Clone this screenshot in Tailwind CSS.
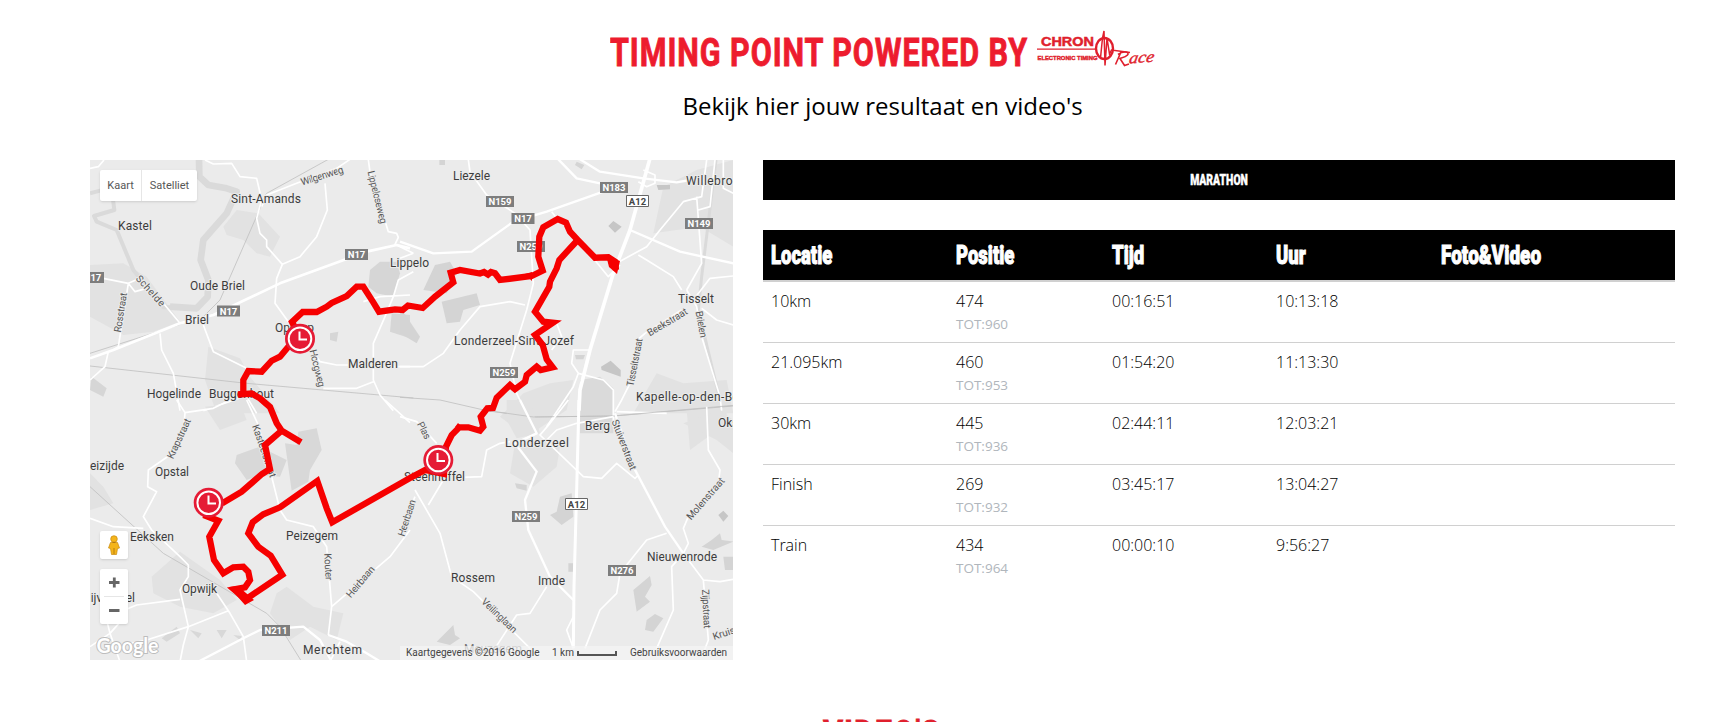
<!DOCTYPE html>
<html lang="nl">
<head>
    <meta charset="UTF-8">
    <meta name="viewport" content="width=device-width, initial-scale=1.0">
    <title>Timing Point</title>
    <script src="https://cdn.jsdelivr.net/npm/@tailwindcss/browser@4"></script>
</head>
<body class="bg-white font-['Open_Sans',sans-serif]">
<div class="h-[722px] overflow-hidden">
    <!-- Header -->
    <header class="flex flex-col items-center pl-[42px] pt-[26px]">
        <h1 class="flex h-12">
            <svg class="w-[546px] h-12" viewBox="610 26 546 48" fill="#ed1c2e">
                <text x="610" y="66" textLength="418" lengthAdjust="spacingAndGlyphs" font-family="Roboto" font-weight="700" font-size="39.500" letter-spacing="1.200" stroke="#ed1c2e" stroke-width=".9">TIMING POINT POWERED BY</text>
                <!-- Chronorace logo -->
                <g fill="#e01f2d">
                    <text x="1041" y="46" textLength="53" lengthAdjust="spacingAndGlyphs" font-family="Liberation Sans" font-weight="700" font-size="12.500" stroke="#e01f2d" stroke-width=".5">CHRON</text>
                    <path d="M1037 48.500h60v1.200h-60z"/>
                    <text x="1037.500" y="60" textLength="60" lengthAdjust="spacingAndGlyphs" font-family="Liberation Sans" font-weight="700" font-size="5.500" stroke="#e01f2d" stroke-width=".4">ELECTRONIC TIMING</text>
                    <ellipse cx="1104.500" cy="48.500" rx="8.500" ry="10.500" fill="none" stroke="#e01f2d" stroke-width="2.400"/>
                    <path d="M1100.500 58L1102.500 38L1104 31L1105 65.500L1107 38L1109.500 54L1111.500 50L1130 52.500" fill="none" stroke="#e01f2d" stroke-width="1.500"/>
                    <path d="M1121 52L1115.500 64.500M1118 54.500C1124 50 1130 52 1127.500 55C1125.500 57.500 1121 58 1120 58.500L1124.500 65.500L1129 64" fill="none" stroke="#e01f2d" stroke-width="1.600"/>
                    <text transform="translate(1128.500 63.500) rotate(-4) skewX(-14)" textLength="25" lengthAdjust="spacingAndGlyphs" font-family="Liberation Serif" font-style="italic" font-size="16" stroke="#e01f2d" stroke-width=".4">ace</text>
                </g>
            </svg>
        </h1>
        <p class="mt-[14px] text-[24px] leading-9 font-normal text-black">Bekijk hier jouw resultaat en video's</p>
    </header>

    <main class="flex gap-[30px] pl-[90px] pt-9">
        <!-- Map -->
        <div class="relative w-[643px] h-[500px] overflow-hidden bg-[#ebebeb] font-['Roboto',sans-serif]">
            <svg class="block w-[643px] h-[500px]" viewBox="90 160 643 500">
                <!-- north west -->
                <g transform="translate(80 150) scale(.33333)" fill="none" stroke-linejoin="round">
                    <g fill="#e2e2e2">
                        <path d="M470 180L535 190L600 260L570 320L530 310L490 270L440 255L430 230Z"/>
                        <path d="M30 345L130 340L200 380L300 515L220 545L130 555L30 500Z"/>
                        <path d="M385 590L480 625L510 680L600 790H410L375 690Z"/>
                    </g>
                    <g fill="#d6d6d6">
                        <path d="M870 360L900 335L950 335L960 370L940 440L890 430L865 410Z"/>
                        <path d="M935 490L990 495V565L930 545Z"/>
                        <path d="M750 550L775 545L770 575L750 570ZM35 680L80 715L70 740L30 720Z"/>
                    </g>
                    <path d="M357 25L358 80L385 105L440 115L470 125L440 190L370 270L362 330L385 390L383 440L350 475L270 470" stroke="#dadada" stroke-width="20"/>
                    <path d="M300 472H250L200 410L160 360L110 240L50 215L42 198L103 180L98 140L60 122L30 130" stroke="#dadada" stroke-width="12"/>
                    <path d="M30 648L500 700L1000 744M30 610L250 540L370 500L420 450L560 130L745 28" stroke="#c0c0c0" stroke-width="2.500"/>
                    <path d="M30 625L100 600L300 520L400 495L600 400L860 305L950 285L990 295" stroke="#fff" stroke-width="8"/>
                    <path d="M375 30L400 42L455 40L480 80L530 85L545 150L530 205L540 250L560 270V290L607 343L590 385L585 460L625 515M810 28L770 55L650 100L560 135L545 170M735 100L742 180L710 260L660 320L607 343M865 30L870 65L925 245L950 250L955 262L945 283L1000 310M1000 365L955 390L940 440L915 500L880 580L880 690L900 735L940 782M70 385L145 400L180 385M145 400L165 425L200 415L250 460L300 520M145 400L115 590L100 600M240 550L245 600L280 670L300 782M370 525L400 605L500 655M85 605L75 650L30 690M700 605L720 635L770 645L805 645M925 650H990M730 715L830 715L880 695M370 782L490 740M500 740L530 790M30 55L55 50L72 30M850 455L900 440L990 435" stroke="#fff" stroke-width="5"/>
                </g>
                <!-- north east -->
                <g transform="translate(400 150) scale(.33333)" fill="none" stroke-linejoin="round">
                    <g fill="#e2e2e2">
                        <path d="M790 110L890 60L1000 30V290L900 230L760 250Z"/>
                        <path d="M370 730L450 700L520 690L500 780L380 860L300 800ZM770 670L850 700L980 690L1000 790H700Z"/>
                        <path d="M860 780H980V820L870 900Z"/>
                        <path d="M540 690L600 680L640 715V850H540Z" fill="#dadada"/>
                    </g>
                    <g fill="#d4d4d4">
                        <path d="M105 345L150 335L170 370L140 430L70 420Z"/>
                        <path d="M125 455L230 430L240 465L190 480L180 515L140 520Z"/>
                        <path d="M0 475L20 500L60 560L50 580L0 550Z"/>
                        <path d="M118 30H135V45H118ZM530 35L553 45L545 58L525 45ZM525 615L555 615L550 628H528Z"/>
                    </g>
                    <g fill="#c6c6c6">
                        <path d="M603 650L632 632L662 660V680L605 660Z"/>
                        <path d="M625 228L640 213L665 230L645 248ZM770 105H810V118L775 120Z"/>
                    </g>
                    <path d="M948 30L905 380L895 480L960 750" stroke="#dadada" stroke-width="9"/>
                    <path d="M0 742L120 750L260 782L400 801L640 798L1000 768" stroke="#c0c0c0" stroke-width="2.500"/>
                    <path d="M750 25L690 240L640 370L570 600L540 720L537 782" stroke="#fff" stroke-width="11"/>
                    <path d="M475 28L530 85L600 100M540 28L600 65L730 85L830 97L870 90M610 125L440 185L340 215L215 305L100 310L0 275M690 240L840 305L1000 340" stroke="#fff" stroke-width="7"/>
                    <path d="M205 30L210 65L260 135L345 190L390 240L400 400L380 480L330 640L350 730L375 782M730 60L765 75L765 100L740 110L715 95M640 345L740 290L780 240L850 155L905 140L920 30M890 140L893 180L905 340L860 420M845 420L820 380L740 330L715 315M895 180L930 170L945 30M860 420L890 470L905 560L960 740L965 782M905 475L950 510L1000 525M880 450L930 385L1000 378M580 325L625 380L660 345M845 480L735 550L712 570M690 700L665 750L645 785M0 650L70 650L130 610L180 540L240 470L330 455L375 465M0 325L40 310M455 185L470 205M470 520L485 560L455 600M570 600L520 600L515 640L535 670L520 710L440 830M535 670L610 690L640 720V830M970 30V115L1000 130M650 785L800 790" stroke="#fff" stroke-width="5"/>
                </g>
                <!-- south west -->
                <g transform="translate(80 400) scale(.33333)" fill="none" stroke-linejoin="round">
                    <g fill="#e2e2e2">
                        <path d="M375 20L480 10L500 60L420 90Z"/>
                        <path d="M30 220L70 260L100 310L30 330Z"/>
                        <path d="M215 530L300 455L420 540L470 600L400 640L300 620L220 580Z"/>
                        <path d="M590 580L620 560L700 620L790 640L770 720L690 680L630 720L570 640Z"/>
                    </g>
                    <g fill="#d8d8d8">
                        <path d="M470 165L540 140L620 180L600 230L540 225L500 240L465 190Z"/>
                        <path d="M615 130L650 135L655 95L710 85L725 150L690 210L685 245L635 272Z"/>
                        <path d="M245 715L290 680L300 700L260 725ZM330 690L365 700L355 715ZM410 690L440 690L425 715ZM460 705L485 708L480 720Z"/>
                    </g>
                    <path d="M30 260L250 460L560 640L600 680L665 785" stroke="#c0c0c0" stroke-width="2.500"/>
                    <path d="M745 705L800 725L860 760L910 790M355 785L490 715L540 690L670 680L720 720L755 785" stroke="#fff" stroke-width="7"/>
                    <path d="M290 0L315 38L400 25L470 -10M315 38L310 100L270 165L205 210L203 260L230 275L190 350L215 390L300 470L325 495V530L300 570L325 680L310 735L300 785M30 355L100 380L190 385M500 0L535 75L580 250L600 330L620 360L700 380L740 440L755 620L745 705M990 390L930 470L755 620M410 580L450 640L490 710L500 785M445 632L325 680L200 720L110 740M60 660L110 640L170 615L300 598M30 740L90 700L75 640M90 700L120 785M90 700L130 655M780 725L750 785M915 0L990 68" stroke="#fff" stroke-width="5"/>
                </g>
                <!-- south east -->
                <g transform="translate(400 400) scale(.33333)" fill="none" stroke-linejoin="round">
                    <g fill="#e2e2e2">
                        <path d="M345 130L420 120L480 140L470 200L400 260L330 220Z"/>
                        <path d="M320 0H390L420 100L350 115L320 60Z"/>
                        <path d="M850 70L960 30L1000 60V160L950 120Z"/>
                    </g>
                    <g fill="#d4d4d4">
                        <path d="M450 345L470 335L480 290L515 280L520 350L485 375Z"/>
                        <path d="M345 250L380 255V272L350 265ZM505 490L520 490V515H505Z"/>
                        <path d="M700 570L750 528L755 555L735 590L750 605L710 635Z"/>
                        <path d="M735 690L740 660L765 642L790 655L760 695ZM110 725L160 675L165 705L180 715L150 735Z"/>
                        <path d="M905 440L935 420L960 400L965 420L1000 425L940 450ZM970 470H1000V510H975Z"/>
                        <path d="M955 345L970 332L985 348L970 365Z" fill="#c6c6c6"/>
                    </g>
                    <path d="M250 30L400 51L640 48L1000 16" stroke="#c0c0c0" stroke-width="2.500"/>
                    <path d="M537 0L530 270L522 560L520 745" stroke="#fff" stroke-width="9"/>
                    <path d="M360 0L410 100L345 130L410 215L375 300L385 390L450 530L520 600M645 40L700 200L795 380L850 460" stroke="#fff" stroke-width="7"/>
                    <path d="M505 0L450 70L420 105L550 230L605 235L650 190L705 235L715 225M440 120L470 90L530 70L640 50M330 125L300 130L260 150L245 230L190 232M850 460L910 540L960 545L1000 538M800 400L740 420L660 520L650 580L600 630L555 745M920 20L925 150L960 210L955 250L865 350L850 385L865 430L850 460L815 500L820 630L770 745M910 540L925 720L910 760M0 50L50 65L110 130M130 240L85 315M45 270L120 400L155 530L220 575L390 745M440 560L390 640L350 645L285 745M45 290L0 400M520 650L500 690L520 745" stroke="#fff" stroke-width="5"/>
                </g>

                <!-- town names -->
                <g font-family="Roboto" font-size="12" fill="#3c3c3c" stroke="#ebebeb" stroke-width="2" stroke-linejoin="round" paint-order="stroke">
                    <text x="118" y="230" textLength="34">Kastel</text>
                    <text x="231" y="203" textLength="70">Sint-Amands</text>
                    <text x="190" y="290" textLength="55">Oude Briel</text>
                    <text x="185" y="324" textLength="24">Briel</text>
                    <text x="275" y="332" textLength="39">Opdorp</text>
                    <text x="348" y="368" textLength="50">Malderen</text>
                    <text x="147" y="398" textLength="54">Hogelinde</text>
                    <text x="209" y="398" textLength="65">Buggenhout</text>
                    <text x="390" y="267" textLength="39">Lippelo</text>
                    <text x="453" y="180" textLength="37">Liezele</text>
                    <text x="686" y="185" textLength="60">Willebroek</text>
                    <text x="678" y="303" textLength="36">Tisselt</text>
                    <text x="454" y="345" textLength="120">Londerzeel-Sint-Jozef</text>
                    <text x="636" y="401" textLength="110">Kapelle-op-den-Bos</text>
                    <text x="585" y="430" textLength="25">Berg</text>
                    <text x="718" y="427">Oksdonk</text>
                    <text x="505" y="447" textLength="64">Londerzeel</text>
                    <text x="404" y="481" textLength="61">Steenhuffel</text>
                    <text x="451" y="582" textLength="44">Rossem</text>
                    <text x="538" y="585" textLength="27">Imde</text>
                    <text x="647" y="561" textLength="70">Nieuwenrode</text>
                    <text x="286" y="540" textLength="52">Peizegem</text>
                    <text x="155" y="476" textLength="34">Opstal</text>
                    <text x="90" y="470" textLength="34">eizijde</text>
                    <text x="130" y="541" textLength="44">Eeksken</text>
                    <text x="182" y="593" textLength="35">Opwijk</text>
                    <text x="82" y="602" textLength="53">Nijverseel</text>
                    <text x="303" y="654" textLength="59">Merchtem</text>
                    <text x="464" y="653" textLength="58" fill="#777">Meuzegem</text>
                </g>

                <!-- street names -->
                <g font-family="Roboto" font-size="10" fill="#555" text-anchor="middle" stroke="#ebebeb" stroke-width="2" stroke-linejoin="round" paint-order="stroke">
                    <text transform="translate(323 179) rotate(-17)" textLength="44">Wilgenweg</text>
                    <text transform="translate(374 198) rotate(76)" textLength="54">Lippeloseweg</text>
                    <text transform="translate(148 293) rotate(48)" textLength="38">Schelde</text>
                    <text transform="translate(124 313) rotate(-81)" textLength="40">Rosstraat</text>
                    <text transform="translate(314 369) rotate(76)" textLength="38">Hoogweg</text>
                    <text transform="translate(182 440) rotate(-65)" textLength="43">Krapstraat</text>
                    <text transform="translate(261 452) rotate(71)" textLength="55">Kasteelstraat</text>
                    <text transform="translate(325 567) rotate(87)" textLength="27">Kouter</text>
                    <text transform="translate(363 584) rotate(-50)" textLength="38">Heirbaan</text>
                    <text transform="translate(410 519) rotate(-72)" textLength="38">Heerbaan</text>
                    <text transform="translate(421 432) rotate(62)" textLength="18">Plas</text>
                    <text transform="translate(497 618) rotate(44)" textLength="45">Veilinglaan</text>
                    <text transform="translate(621 446) rotate(69)" textLength="53">Stuiverstraat</text>
                    <text transform="translate(708 501) rotate(-49)" textLength="52">Molenstraat</text>
                    <text transform="translate(703 609) rotate(87)" textLength="39">Zijpstraat</text>
                    <text transform="translate(714 640) rotate(-18)" text-anchor="start">Kruisstraat</text>
                    <text transform="translate(669 325) rotate(-31)" textLength="45">Beekstraat</text>
                    <text transform="translate(698 325) rotate(79)" textLength="27">Brielen</text>
                    <text transform="translate(638 363) rotate(-79)" textLength="49">Tisseltstraat</text>
                </g>

                <!-- road shields -->
                <g fill="#7d7d7d">
                    <path d="M345 249h23v11h-23zM217 305.500h23v11h-23zM81 272h23v11h-23zM486 196h28v11h-28zM511.500 213h23v11h-23zM600 182h28v11h-28zM685 218h28v11h-28zM517 241h28v11h-28zM490 367h28v11h-28zM512 511h28v11h-28zM608 565h28v11h-28zM262 625h28v11h-28z"/>
                    <path d="M626.500 195.500h22v11h-22zM565.500 498.500h22v11h-22z" fill="#fff" stroke="#666"/>
                </g>
                <g font-family="Roboto" font-weight="700" font-size="9.500" fill="#fff" text-anchor="middle">
                    <text x="356.500" y="258">N17</text>
                    <text x="228.500" y="314.500">N17</text>
                    <text x="92.500" y="281">N17</text>
                    <text x="500" y="205">N159</text>
                    <text x="523" y="222">N17</text>
                    <text x="614" y="191">N183</text>
                    <text x="699" y="227">N149</text>
                    <text x="531" y="250">N259</text>
                    <text x="504" y="376">N259</text>
                    <text x="526" y="520">N259</text>
                    <text x="622" y="574">N276</text>
                    <text x="276" y="634">N211</text>
                    <g fill="#444">
                        <text x="637.500" y="204.500">A12</text>
                        <text x="576.500" y="507.500">A12</text>
                    </g>
                </g>

                <!-- course -->
                <g fill="none" stroke="#f60000" stroke-width="6.300">
                    <path d="M300 338L288.300 346.700L280 356.700L271.700 360.700L261.700 371.700L248.300 371L243.300 380V393M300 338L292 322L302.700 312L316.700 312L326.700 306.700L331.700 303L346.700 296L356.700 286.700H363.300L373.300 302.300L379 311.700L395 309.300L402.700 310L408 305.500L422.700 308L435 296.700L453.300 282.300L450.700 272.700L460 270L480 273.500L484 272L488 274.500L491 272L495 273.300L500 280L531.700 276L542.700 270.700L538.300 256.700L539.300 236.700L543.300 227.300L557.700 219L566 222.700L570 231.700L577.700 240L595 257.700L608.300 257.300L615 261.700L616 270"/>
                    <path d="M577.700 240L559.300 260L556.700 268.300L550 281.700L549.300 286.700L535 311.700L543.300 321.700L553 322.700L535 335L542.700 345L546.700 359.300L552.700 367.300L540.700 370L536.700 366.700L526.700 375L525 381.700L515 389.300L510 385L496.700 397.700L493 408L487.300 408.300L480.700 416.700L483.300 426.700L480 430.700L468.300 427.300H459.300L451.700 435L446 446.700L444 474L425 470L410 478L332.300 522.300L326.700 508.300L317.300 481L280 507.300L263.300 514.300L252.700 522.300L248.300 533.300L258.300 546.700L270.700 555.700L282.300 574.700L245.700 599.300L234 589.300L245 587.300L250 580L248.300 571.700L243.300 566.700L233.300 567.300L223.300 573.300L214 560L209.300 536.700L218.300 520.700L206 516L208 503L223.300 502.700L241.700 491.700L262 474L270 469L265 445L281.700 430.700"/>
                    <path d="M238 394.500L251.700 393.500L260 398.300L270 407L276.700 423.300L281.700 430.700L301 442.300"/>
                </g>
                <g fill="#f60000">
                    <path d="M606 255L620 261L617 274L609 267ZM229 587L238 586L254 600L245 605ZM455 427L458 423L462 427ZM525 274L532 281L532 272Z"/>
                </g>

                <!-- timing points -->
                <g fill="#e51b35" stroke="#fff" stroke-width="2">
                    <circle cx="300" cy="338.700" r="15" stroke="none"/>
                    <circle cx="300" cy="338.700" r="11.300"/>
                    <path d="M299.500 331.500V339.500H307" fill="none"/>
                    <circle cx="208.700" cy="502.700" r="15" stroke="none"/>
                    <circle cx="208.700" cy="502.700" r="11.300"/>
                    <path d="M208.500 495.500V503.500H216" fill="none"/>
                    <circle cx="438.300" cy="460" r="15" stroke="none"/>
                    <circle cx="438.300" cy="460" r="11.300"/>
                    <path d="M437.500 453V461H445" fill="none"/>
                </g>
                <g font-family="Lato" font-weight="700" font-size="20">
                    <text x="96.500" y="653" textLength="62" lengthAdjust="spacingAndGlyphs" fill="#fff" stroke="#bdbdbd" stroke-width="2" paint-order="stroke">Google</text>
                </g>
            </svg>

            <!-- Map controls -->
            <div class="absolute left-[10px] top-[10px] flex h-[31px] bg-white rounded-xs shadow text-[11px] leading-[31px] text-[#565656] text-center">
                <span class="w-[42px] border-r border-[#e6e6e6]">Kaart</span>
                <span class="w-[55px]">Satelliet</span>
            </div>
            <div class="absolute left-[10px] top-[371px] flex size-7 items-center justify-center bg-white rounded-xs shadow">
                <svg class="w-3 h-5" viewBox="0 0 12 20">
                    <path d="M2.500 7.500H9.500L11.500 13L9.500 13.500L8.500 19.500H3.500L2.500 13.500L.5 13Z" fill="#f4b41a" stroke="#c98a10" stroke-width=".7"/>
                    <circle cx="6" cy="4" r="3.300" fill="#f4b41a" stroke="#c98a10" stroke-width=".7"/>
                    <path d="M6 13V19M4.500 7.500H7.500" stroke="#a8700c" stroke-width=".8"/>
                </svg>
            </div>
            <div class="absolute left-[10px] top-[409px] flex h-[55px] w-7 flex-col bg-white rounded-xs shadow">
                <svg class="w-7 h-[55px]" viewBox="0 0 28 55" stroke="#666" stroke-width="2.800">
                    <path d="M9 13.500H19.500M14.300 8.500V18.500M9 41.500H19.500"/>
                    <path d="M4 27.500H24" stroke="#e6e6e6" stroke-width="1"/>
                </svg>
            </div>
            <div class="absolute right-0 bottom-0 flex h-[14px] w-[333px] items-center bg-[#f5f5f5]/70 pl-[6px] text-[10px] leading-[14px] text-[#444] whitespace-nowrap">
                <span class="w-[146px]">Kaartgegevens ©2016 Google</span>
                <span class="w-[25px]">1 km</span>
                <span class="h-[5px] w-[40px] border-2 border-t-0 border-[#555]"></span>
                <span class="ml-[13px]">Gebruiksvoorwaarden</span>
            </div>
        </div>

        <!-- Results -->
        <div class="w-[912px]">
            <div class="flex h-10 items-center justify-center bg-black pb-px">
                <span class="inline-block scale-x-[.74] text-sm font-black text-white font-['Roboto'] [-webkit-text-stroke:.4px_white]">MARATHON</span>
            </div>
            <table class="mt-[30px] w-full table-fixed text-left">
                <thead>
                    <tr class="h-[51px] border-b-2 border-[#d0d0d0] bg-black text-[25px] leading-6 text-white font-['Roboto'] [-webkit-text-stroke:1px_white]">
                        <th class="w-[185px] pl-2 pt-[2px] font-black"><span class="inline-block origin-left scale-x-[.74]">Locatie</span></th>
                        <th class="w-[156px] pl-2 pt-[2px] font-black"><span class="inline-block origin-left scale-x-[.74]">Positie</span></th>
                        <th class="w-[164px] pl-2 pt-[2px] font-black"><span class="inline-block origin-left scale-x-[.74]">Tijd</span></th>
                        <th class="w-[165px] pl-2 pt-[2px] font-black"><span class="inline-block origin-left scale-x-[.74]">Uur</span></th>
                        <th class="pl-2 pt-[2px] font-black"><span class="inline-block origin-left scale-x-[.76]">Foto&amp;Video</span></th>
                    </tr>
                </thead>
                <tbody class="text-base leading-[22px] font-light text-black">
                    <tr class="h-[61px] align-top">
                        <td class="px-2 pt-2">10km</td>
                        <td class="px-2 pt-2">474<div class="text-[13.5px] leading-6 font-normal text-[#b0b6bc]">TOT:960</div></td>
                        <td class="px-2 pt-2">00:16:51</td>
                        <td class="px-2 pt-2">10:13:18</td>
                        <td></td>
                    </tr>
                    <tr class="h-[61px] align-top border-t border-[#d0d0d0]">
                        <td class="px-2 pt-2">21.095km</td>
                        <td class="px-2 pt-2">460<div class="text-[13.5px] leading-6 font-normal text-[#b0b6bc]">TOT:953</div></td>
                        <td class="px-2 pt-2">01:54:20</td>
                        <td class="px-2 pt-2">11:13:30</td>
                        <td></td>
                    </tr>
                    <tr class="h-[61px] align-top border-t border-[#d0d0d0]">
                        <td class="px-2 pt-2">30km</td>
                        <td class="px-2 pt-2">445<div class="text-[13.5px] leading-6 font-normal text-[#b0b6bc]">TOT:936</div></td>
                        <td class="px-2 pt-2">02:44:11</td>
                        <td class="px-2 pt-2">12:03:21</td>
                        <td></td>
                    </tr>
                    <tr class="h-[61px] align-top border-t border-[#d0d0d0]">
                        <td class="px-2 pt-2">Finish</td>
                        <td class="px-2 pt-2">269<div class="text-[13.5px] leading-6 font-normal text-[#b0b6bc]">TOT:932</div></td>
                        <td class="px-2 pt-2">03:45:17</td>
                        <td class="px-2 pt-2">13:04:27</td>
                        <td></td>
                    </tr>
                    <tr class="h-[61px] align-top border-t border-[#d0d0d0]">
                        <td class="px-2 pt-2">Train</td>
                        <td class="px-2 pt-2">434<div class="text-[13.5px] leading-6 font-normal text-[#b0b6bc]">TOT:964</div></td>
                        <td class="px-2 pt-2">00:00:10</td>
                        <td class="px-2 pt-2">9:56:27</td>
                        <td></td>
                    </tr>
                </tbody>
            </table>
        </div>
    </main>

    <!-- Videos -->
    <h2 class="flex justify-center pl-[40px] pt-12">
        <svg class="w-[120px] h-12" viewBox="0 0 120 48" fill="#e01f2d">
            <text x="1" y="39.500" textLength="118" lengthAdjust="spacingAndGlyphs" font-family="Roboto" font-weight="700" font-size="39.500" letter-spacing="1.200" stroke="#e01f2d" stroke-width=".9">VIDEO'S</text>
        </svg>
    </h2>
</div>
</body>
</html>
